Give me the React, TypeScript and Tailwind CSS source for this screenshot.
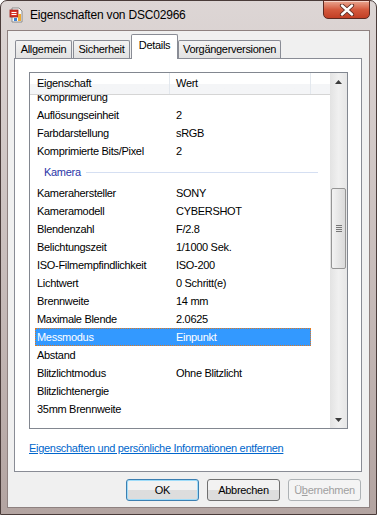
export default function App() {
  const font = { fontFamily: '"Liberation Sans", Arial, sans-serif' };

  const top = [
    ["Komprimierung", ""],
    ["Auflösungseinheit", "2"],
    ["Farbdarstellung", "sRGB"],
    ["Komprimierte Bits/Pixel", "2"],
  ];
  const kamera = [
    ["Kamerahersteller", "SONY"],
    ["Kameramodell", "CYBERSHOT"],
    ["Blendenzahl", "F/2.8"],
    ["Belichtungszeit", "1/1000 Sek."],
    ["ISO-Filmempfindlichkeit", "ISO-200"],
    ["Lichtwert", "0 Schritt(e)"],
    ["Brennweite", "14 mm"],
    ["Maximale Blende", "2.0625"],
    ["Messmodus", "Einpunkt"],
    ["Abstand", ""],
    ["Blitzlichtmodus", "Ohne Blitzlicht"],
    ["Blitzlichtenergie", ""],
    ["35mm Brennweite", ""],
  ];

  const row = (p: string, v: string, selected = false) => (
    <div
      key={p}
      className={
        "ml-[5px] w-[276px] h-[18px] flex items-center border " +
        (selected
          ? "bg-[#3399ff] text-white border-dotted border-[#e0781e]"
          : "border-transparent text-black")
      }
    >
      <span className="w-[140px] pl-[1px] whitespace-nowrap">{p}</span>
      <span className="whitespace-nowrap">{v}</span>
    </div>
  );

  return (
    <div
      className="w-[377px] h-[515px] flex flex-col rounded-t-[7px] border border-[#4a3c3a] bg-gradient-to-b from-[#ddd6d5] via-[#c9bebc] to-[#b3a4a1] text-[11px] tracking-[-0.3px]"
      style={font}
    >
      {/* title bar */}
      <div className="h-[29px] flex items-start shrink-0">
        <div className="flex items-center h-[28px] pl-[8px]">
          <svg width="16" height="16" viewBox="0 0 16 16">
            <path d="M3 1h7l3 3v11H3z" fill="#fafafa" stroke="#8a8a8a" />
            <rect x="1" y="3" width="8" height="7" fill="#d9342b" stroke="#9c1f18" strokeWidth="0.8" />
            <rect x="2.5" y="5" width="5" height="1" fill="#fff" />
            <rect x="2.5" y="7" width="5" height="1" fill="#fff" />
            <rect x="9" y="7" width="3" height="7" fill="#f0a830" />
            <rect x="5" y="11" width="3" height="3" fill="#3b7fd4" />
          </svg>
          <span className="ml-[5px] text-[12px] tracking-[-0.2px] text-black">
            Eigenschaften von DSC02966
          </span>
        </div>
        <div className="ml-auto mr-[6px] w-[47px] h-[19px] -mt-px flex items-center justify-center rounded-b-[5px] border border-[#5c2a22] bg-gradient-to-b from-[#e9a691] via-[#d45a3e] to-[#c23f25] shadow-[inset_0_1px_0_rgba(255,255,255,0.5)]">
          <svg width="16" height="12" viewBox="0 0 16 12">
            <path d="M3 1.5l10 9M13 1.5l-10 9" stroke="#5a2a22" strokeWidth="4.2" strokeLinecap="round" />
            <path d="M3 1.5l10 9M13 1.5l-10 9" stroke="#fff" strokeWidth="2.4" strokeLinecap="round" />
          </svg>
        </div>
      </div>

      {/* client area */}
      <div className="mx-[6px] mb-[6px] flex-1 border border-[#8e8180] bg-[#f0f0f0] flex flex-col">
        {/* tabs */}
        <div className="ml-[6px] mr-[7px] mt-[3px] h-[24px] flex items-end text-black">
          <div className="ml-[1px] w-[57px] h-[18px] flex items-center justify-center border border-b-0 border-[#898c95] rounded-t-[2px] bg-gradient-to-b from-[#f3f3f3] to-[#e2e2e2]">
            Allgemein
          </div>
          <div className="ml-[1px] w-[57px] h-[18px] flex items-center justify-center border border-b-0 border-[#898c95] rounded-t-[2px] bg-gradient-to-b from-[#f3f3f3] to-[#e2e2e2]">
            Sicherheit
          </div>
          <div className="ml-[1px] w-[47px] h-[25px] -mb-px z-10 pb-[3px] flex items-center justify-center border border-b-0 border-[#898c95] rounded-t-[2px] bg-white">
            Details
          </div>
          <div className="w-[103px] h-[18px] flex items-center justify-center border border-b-0 border-[#898c95] rounded-t-[2px] bg-gradient-to-b from-[#f3f3f3] to-[#e2e2e2]">
            Vorgängerversionen
          </div>
        </div>

        {/* panel */}
        <div className="ml-[6px] mr-[7px] h-[414px] border border-[#898c95] bg-white flex flex-col">
          {/* list view */}
          <div className="ml-[14px] mt-[13px] w-[319px] h-[357px] border border-[#828790] flex">
            <div className="w-[300px] flex flex-col">
              <div className="h-[22px] flex border-b border-[#d5d5d5] bg-gradient-to-b from-white from-50% to-[#f4f5f7] to-50% text-black">
                <div className="w-[140px] pl-[7px] flex items-center border-r border-[#e3e8ee]">Eigenschaft</div>
                <div className="w-[141px] pl-[6px] flex items-center border-r border-[#e3e8ee]">Wert</div>
                <div className="flex-1" />
              </div>
              <div className="flex-1 overflow-hidden">
                <div className="-mt-[7px]">
                  {top.map(([p, v]) => row(p, v))}
                  <div className="h-[24px] flex items-center pl-[14px] pr-[12px]">
                    <span className="text-[#2a36a8]">Kamera</span>
                    <div className="ml-[5px] flex-1 h-px bg-[#d5dff2]" />
                  </div>
                  {kamera.map(([p, v]) => row(p, v, p === "Messmodus"))}
                </div>
              </div>
            </div>
            {/* scrollbar */}
            <div className="w-[17px] flex flex-col bg-gradient-to-r from-[#e3e3e3] via-[#f0f0f0] to-[#e6e6e6]">
              <div className="h-[17px] flex items-center justify-center">
                <svg width="7" height="4" viewBox="0 0 7 4">
                  <path d="M0 4L3.5 0L7 4z" fill="#3c3c3c" />
                </svg>
              </div>
              <div className="mt-[98px] mx-px h-[81px] rounded-[2px] border border-[#959595] bg-gradient-to-r from-[#f3f3f3] to-[#dadada] flex flex-col items-center justify-center gap-[1px]">
                <div className="w-[6px] h-px bg-[#777]" />
                <div className="w-[6px] h-px bg-[#777]" />
                <div className="w-[6px] h-px bg-[#777]" />
                <div className="w-[6px] h-px bg-[#777]" />
              </div>
              <div className="flex-1" />
              <div className="h-[17px] flex items-center justify-center">
                <svg width="7" height="4" viewBox="0 0 7 4">
                  <path d="M0 0L3.5 4L7 0z" fill="#3c3c3c" />
                </svg>
              </div>
            </div>
          </div>
          <div className="ml-[14px] mt-[11px]">
            <span className="text-[#0066cc] underline">
              Eigenschaften und persönliche Informationen entfernen
            </span>
          </div>
        </div>

        {/* buttons */}
        <div className="mt-[7px] mr-[8px] flex justify-end gap-[8px]">
          <div className="w-[73px] h-[22px] rounded-[3px] border border-[#3c7fb1] shadow-[inset_0_0_0_1px_#9fdcf9] bg-gradient-to-b from-[#f2f2f2] from-50% to-[#dddddd] to-50% flex items-center justify-center text-black">
            OK
          </div>
          <div className="w-[73px] h-[22px] rounded-[3px] border border-[#707070] bg-gradient-to-b from-[#f2f2f2] from-50% to-[#dddddd] to-50% flex items-center justify-center text-black">
            Abbrechen
          </div>
          <div className="w-[73px] h-[22px] rounded-[3px] border border-[#adb2b5] bg-[#f4f4f4] flex items-center justify-center text-[#a0a0a0]">
            Ü<span className="underline">b</span>ernehmen
          </div>
        </div>
      </div>
    </div>
  );
}
